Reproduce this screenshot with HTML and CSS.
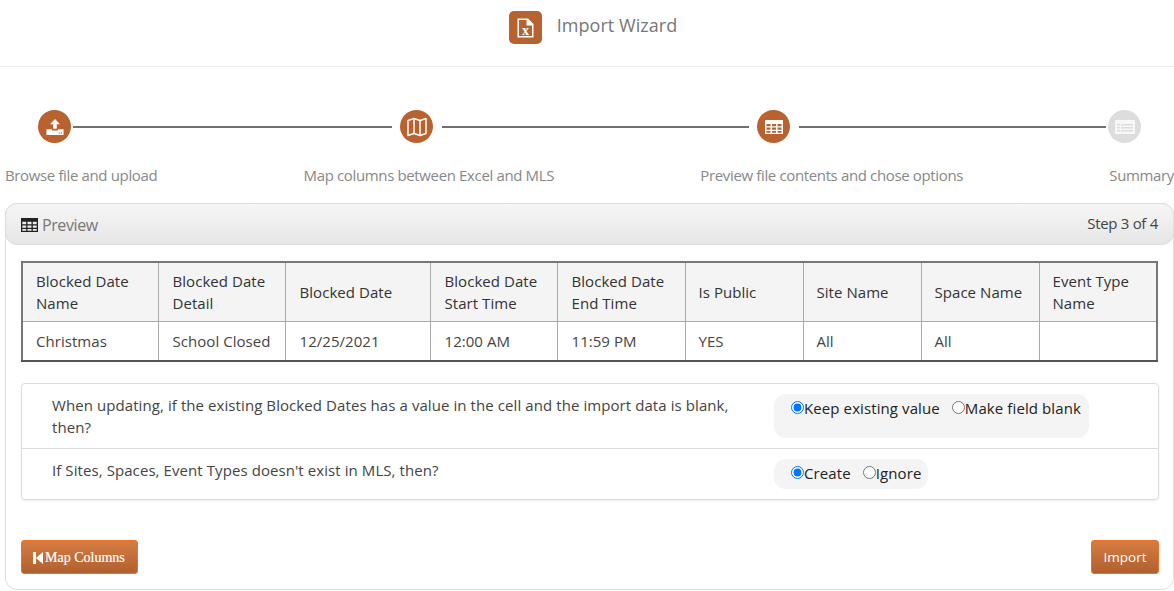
FILE: index.html
```html
<!DOCTYPE html>
<html lang="en">
<head>
<meta charset="utf-8">
<title>Import Wizard</title>
<link rel="stylesheet" href="styles.css">
</head>
<body>
<header class="top">
  <span class="logo">
    <svg width="17" height="20" viewBox="0 0 17 20"><path class="sheet" fill-rule="evenodd" d="M0.500 0.500h10.500l5.500 5.500v13.500H0.500zM2 2v16h13V7.500h-5.500V2z"/><path class="sheet" d="M11 1.500l4.500 4.500H11z"/><text x="8.500" y="16.500" class="x">x</text></svg>
  </span>
  <h1 class="title">Import Wizard</h1>
</header>

<section class="stepper">
  <div class="track">
    <span class="dot">
      <svg width="18" height="18" viewBox="0 0 20 20"><path fill="#fff" d="M10 1l5.500 6H12v5H8V7H4.500z"/><path fill="#fff" d="M0.500 12.500H6.500V14h7v-1.500h6V19h-19z"/><rect x="14" y="16" width="1.300" height="1.300" fill="#b8622f"/><rect x="16.500" y="16" width="1.300" height="1.300" fill="#b8622f"/></svg>
    </span>
    <span class="line line-a"></span>
    <span class="dot">
      <svg width="20" height="20" viewBox="0 0 20 20" fill="none" stroke="#fff" stroke-width="1.500" stroke-linejoin="round"><path d="M1 3.500L7 1.500L13 3.500L19 1.500V16.500L13 18.500L7 16.500L1 18.500z"/><path d="M7 1.500V16.500M13 3.500V18.500"/></svg>
    </span>
    <span class="line line-b"></span>
    <span class="dot">
      <svg width="18" height="14" viewBox="0 0 18 14"><path fill="#fff" fill-rule="evenodd" d="M0 0h18v14H0zM1.500 4v2.300h4V4zM7 4v2.300h4V4zM12.500 4v2.300h4V4zM1.500 7.500v2.300h4V7.500zM7 7.500v2.300h4V7.500zM12.500 7.500v2.300h4V7.500zM1.500 11v1.700h4V11zM7 11v1.700h4V11zM12.500 11v1.700h4V11z"/></svg>
    </span>
    <span class="line line-c"></span>
    <span class="dot dot-off">
      <svg width="20" height="16" viewBox="0 0 20 16"><path fill="#f7f7f7" fill-rule="evenodd" d="M0 1h20v14H0zM2 5v1.600h3V5zM6 5v1.600h12V5zM2 8v1.600h3V8zM6 8v1.600h12V8zM2 11v1.600h3V11zM6 11v1.600h12V11z"/></svg>
    </span>
  </div>
  <div class="labels">
    <span>Browse file and upload</span>
    <span>Map columns between Excel and MLS</span>
    <span>Preview file contents and chose options</span>
    <span>Summary</span>
  </div>
</section>

<main class="card">
  <div class="card-head">
    <span class="head-left">
      <svg class="head-icon" width="17" height="14" viewBox="0 0 17 14"><path fill="#222" fill-rule="evenodd" d="M0 0h17v14H0zM1.300 3.800v2.400h3.900V3.800zM6.500 3.800v2.400h4V3.800zM11.800 3.800v2.400h3.900V3.800zM1.300 7.400v2.400h3.900V7.400zM6.500 7.400v2.400h4V7.400zM11.800 7.400v2.400h3.900V7.400zM1.300 11v1.800h3.900V11zM6.500 11v1.800h4V11zM11.800 11v1.800h3.900V11z"/></svg>
      Preview
    </span>
    <span class="head-step">Step 3 of 4</span>
  </div>
  <div class="card-body">
    <table class="grid">
      <colgroup>
        <col class="c1"><col class="c2"><col class="c3"><col class="c4"><col class="c5"><col class="c6"><col class="c7"><col class="c8"><col class="c9">
      </colgroup>
      <thead>
        <tr>
          <th>Blocked Date Name</th>
          <th>Blocked Date Detail</th>
          <th>Blocked Date</th>
          <th>Blocked Date Start Time</th>
          <th>Blocked Date End Time</th>
          <th>Is Public</th>
          <th>Site Name</th>
          <th>Space Name</th>
          <th>Event Type Name</th>
        </tr>
      </thead>
      <tbody>
        <tr>
          <td>Christmas</td>
          <td>School Closed</td>
          <td>12/25/2021</td>
          <td>12:00 AM</td>
          <td>11:59 PM</td>
          <td>YES</td>
          <td>All</td>
          <td>All</td>
          <td></td>
        </tr>
      </tbody>
    </table>

    <div class="options">
      <div class="opt opt-first">
        <p class="question">When updating, if the existing Blocked Dates has a value in the cell and the import data is blank, then?</p>
        <div class="pill pill-tall">
          <label class="radio"><input type="radio" name="blank" checked>Keep existing value</label>
          <label class="radio"><input type="radio" name="blank">Make field blank</label>
        </div>
      </div>
      <div class="opt">
        <p class="question">If Sites, Spaces, Event Types doesn't exist in MLS, then?</p>
        <div class="pill">
          <label class="radio"><input type="radio" name="missing" checked>Create</label>
          <label class="radio"><input type="radio" name="missing">Ignore</label>
        </div>
      </div>
    </div>

    <div class="actions">
      <button class="btn btn-serif" type="button">
        <svg width="10" height="12" viewBox="0 0 10 12"><path fill="#fff" d="M0 0h3v12H0zM10 0v12L3 6z"/></svg>
        Map Columns
      </button>
      <button class="btn btn-import" type="button">Import</button>
    </div>
  </div>
</main>
</body>
</html>
```
FILE: styles.css
```css
* { box-sizing: border-box; }
html, body { margin: 0; height: 591px; overflow: hidden; background: #fff; }
body { font-family: "Open Sans", "Noto Sans", sans-serif; font-size: 15px; color: #444; }

.top { height: 67px; border-bottom: 1px solid #eee; display: flex; align-items: flex-start; justify-content: center; gap: 15px; padding: 11px 0 0 12px; }
.logo { width: 33px; height: 33px; border-radius: 5px; background: #b8622f; display: flex; align-items: center; justify-content: center; }
.sheet { fill: #fff; }
.x { fill: #fff; font-family: "Liberation Serif", serif; font-size: 14px; font-weight: 700; text-anchor: middle; }
.title { margin: 0; font-size: 18px; font-weight: 400; color: #777; line-height: 29px; letter-spacing: 0.05px; }

.stepper { height: 136px; padding-top: 43px; }
.track { display: flex; align-items: center; padding-left: 38px; height: 33px; }
.dot { flex: none; width: 33px; height: 33px; border-radius: 50%; background: #b8622f; display: flex; align-items: center; justify-content: center; }
.dot-off { background: #ddd; }
.line { flex: none; height: 2px; background: #707070; margin-left: 2px; }
.line-a { width: 319px; margin-right: 8px; }
.line-b { width: 307px; margin-left: 9px; margin-right: 8px; }
.line-c { width: 307px; margin-left: 9px; margin-right: 2px; }
.labels { display: flex; justify-content: space-between; padding-left: 5px; margin-top: 22px; font-size: 15px; line-height: 20px; color: #888; white-space: nowrap; letter-spacing: -0.36px; }

.card { margin-left: 5px; height: 387px; border: 1px solid #ddd; border-radius: 12px; }
.card-head { height: 42px; margin: -1px -1px 0; border: 1px solid #ddd; border-radius: 12px; background: linear-gradient(#f6f6f6, #e6e6e6); display: flex; justify-content: space-between; align-items: center; padding: 0 15px; }
.head-left { margin-top: 2px; font-size: 16px; color: #777; display: flex; align-items: center; gap: 4px; letter-spacing: -0.4px; }
.head-step { margin-bottom: 2px; font-size: 15px; color: #444; letter-spacing: -0.3px; }

.card-body { padding: 16px 15px 0 15px; }
.grid { width: 1137px; table-layout: fixed; border-collapse: collapse; border: 2px solid #777; border-bottom-color: #555; font-size: 15px; line-height: 22px; }
.c1 { width: 136px; } .c2 { width: 127px; } .c3 { width: 145px; } .c4 { width: 127px; } .c5 { width: 128px; } .c6 { width: 118px; } .c7 { width: 118px; } .c8 { width: 118px; }
.grid th, .grid td { border: 1px solid #aaa; padding: 0 13px; text-align: left; font-weight: 400; letter-spacing: 0.05px; }
.grid th:nth-child(n+2):nth-child(-n+5), .grid td:nth-child(n+2):nth-child(-n+5) { padding-left: 14px; }
.grid th { height: 59px; background: #f4f4f4; color: #333; }
.grid td { height: 40px; color: #444; }

.options { margin-top: 21px; width: 1138px; height: 117px; border: 1px solid #ddd; border-radius: 4px; box-shadow: 0 1px 2px rgba(0,0,0,.08); }
.opt { display: flex; align-items: flex-start; padding: 10px 0 0 30px; height: 51px; }
.opt-first { height: 65px; border-bottom: 1px solid #ddd; }
.question { margin: 0; width: 722px; padding-right: 12px; flex: none; font-size: 15px; line-height: 22px; color: #444; letter-spacing: 0.08px; }
.pill { padding: 3px 7px 0 17px; height: 30px; border-radius: 12px; background: #f4f4f4; display: flex; gap: 12px; color: #222; letter-spacing: 0.1px; line-height: 22px; }
.pill-tall { height: 44px; width: 315px; }
.radio { display: flex; align-items: flex-start; white-space: nowrap; }
.radio input { margin: 4px 0 0 0; width: 13px; height: 13px; }

.actions { display: flex; justify-content: space-between; margin-top: 40px; width: 1138px; }
.btn { height: 34px; padding: 1px 0 0; border: 1px solid #f07020; border-radius: 3px; background: linear-gradient(#d67c42, #b0602f); color: #fff; font: 13.500px/1 "Open Sans", sans-serif; display: flex; align-items: center; gap: 2px; }
.btn-import { width: 68px; justify-content: center; }
.btn-serif { font-family: "Liberation Serif", serif; font-size: 14px; font-weight: 400; width: 117px; padding: 1px 0 0 11px; -webkit-text-stroke: 0.2px #fff; }
```
